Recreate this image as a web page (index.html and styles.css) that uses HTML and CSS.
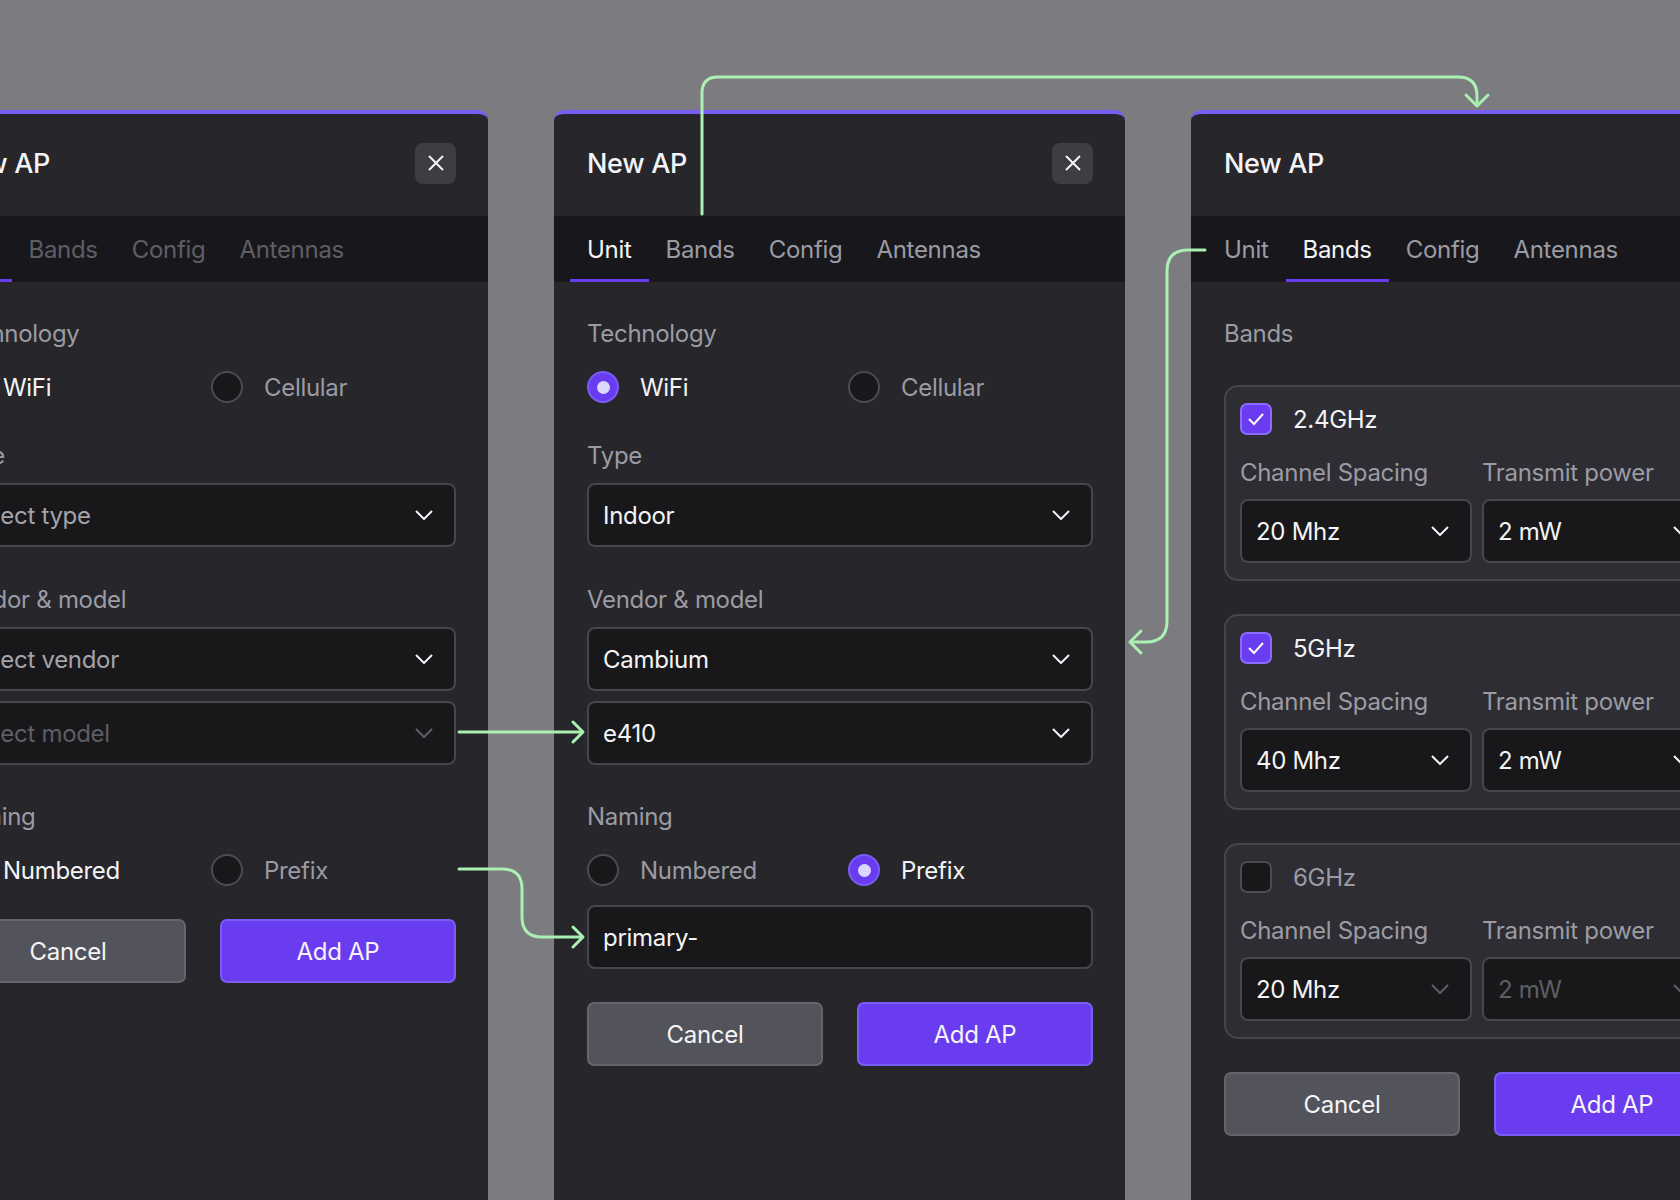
FILE: index.html
```html
<!DOCTYPE html>
<html lang="en">
<head>
  <meta charset="UTF-8">
  <meta name="viewport" content="width=device-width, initial-scale=1.0">
  <title>New AP flow</title>
  <link rel="stylesheet" href="styles.css">
</head>
<body>
  <div class="board">

    <!-- Step 1: empty Unit tab -->
    <section class="modal">
      <header class="modal-header">
        <h2 class="modal-title">New AP</h2>
        <button class="close-btn" aria-label="Close">
          <svg width="20" height="20" viewBox="0 0 20 20"><path d="M3 3 L17 17 M17 3 L3 17" /></svg>
        </button>
      </header>
      <nav class="tabs tabs-locked">
        <a class="tab active">Unit</a>
        <a class="tab">Bands</a>
        <a class="tab">Config</a>
        <a class="tab">Antennas</a>
      </nav>
      <div class="modal-body">
        <div class="label">Technology</div>
        <div class="radio-row">
          <label class="radio checked"><span class="dot"></span>WiFi</label>
          <label class="radio"><span class="dot"></span>Cellular</label>
        </div>

        <div class="label gap-top">Type</div>
        <div class="select placeholder">
          <span>Select type</span>
          <svg class="chevron" width="18" height="10" viewBox="0 0 18 10"><path d="M1 1 L9 9 L17 1" /></svg>
        </div>

        <div class="label gap-top">Vendor &amp; model</div>
        <div class="select placeholder">
          <span>Select vendor</span>
          <svg class="chevron" width="18" height="10" viewBox="0 0 18 10"><path d="M1 1 L9 9 L17 1" /></svg>
        </div>
        <div class="select stacked disabled">
          <span>Select model</span>
          <svg class="chevron" width="18" height="10" viewBox="0 0 18 10"><path d="M1 1 L9 9 L17 1" /></svg>
        </div>

        <div class="label gap-top naming">Naming</div>
        <div class="radio-row">
          <label class="radio checked"><span class="dot"></span>Numbered</label>
          <label class="radio"><span class="dot"></span>Prefix</label>
        </div>

        <div class="actions">
          <button class="btn btn-cancel">Cancel</button>
          <button class="btn btn-primary">Add AP</button>
        </div>
      </div>
    </section>

    <!-- Step 2: Unit tab filled in -->
    <section class="modal">
      <header class="modal-header">
        <h2 class="modal-title">New AP</h2>
        <button class="close-btn" aria-label="Close">
          <svg width="20" height="20" viewBox="0 0 20 20"><path d="M3 3 L17 17 M17 3 L3 17" /></svg>
        </button>
      </header>
      <nav class="tabs">
        <a class="tab active">Unit</a>
        <a class="tab">Bands</a>
        <a class="tab">Config</a>
        <a class="tab">Antennas</a>
      </nav>
      <div class="modal-body">
        <div class="label">Technology</div>
        <div class="radio-row">
          <label class="radio checked"><span class="dot"></span>WiFi</label>
          <label class="radio"><span class="dot"></span>Cellular</label>
        </div>

        <div class="label gap-top">Type</div>
        <div class="select">
          <span>Indoor</span>
          <svg class="chevron" width="18" height="10" viewBox="0 0 18 10"><path d="M1 1 L9 9 L17 1" /></svg>
        </div>

        <div class="label gap-top">Vendor &amp; model</div>
        <div class="select">
          <span>Cambium</span>
          <svg class="chevron" width="18" height="10" viewBox="0 0 18 10"><path d="M1 1 L9 9 L17 1" /></svg>
        </div>
        <div class="select stacked">
          <span>e410</span>
          <svg class="chevron" width="18" height="10" viewBox="0 0 18 10"><path d="M1 1 L9 9 L17 1" /></svg>
        </div>

        <div class="label gap-top naming">Naming</div>
        <div class="radio-row">
          <label class="radio"><span class="dot"></span>Numbered</label>
          <label class="radio checked"><span class="dot"></span>Prefix</label>
        </div>
        <div class="text-input">primary-</div>

        <div class="actions">
          <button class="btn btn-cancel">Cancel</button>
          <button class="btn btn-primary">Add AP</button>
        </div>
      </div>
    </section>

    <!-- Step 3: Bands tab -->
    <section class="modal">
      <header class="modal-header">
        <h2 class="modal-title">New AP</h2>
        <button class="close-btn" aria-label="Close">
          <svg width="20" height="20" viewBox="0 0 20 20"><path d="M3 3 L17 17 M17 3 L3 17" /></svg>
        </button>
      </header>
      <nav class="tabs">
        <a class="tab">Unit</a>
        <a class="tab active">Bands</a>
        <a class="tab">Config</a>
        <a class="tab">Antennas</a>
      </nav>
      <div class="modal-body">
        <div class="label">Bands</div>

        <div class="band-card">
          <label class="check-row"><span class="checkbox checked"><svg width="18" height="14" viewBox="0 0 18 14"><path d="M2 7 L7 12 L16 2" /></svg></span>2.4GHz</label>
          <div class="band-grid">
            <div>
              <div class="label">Channel Spacing</div>
              <div class="select">
                <span>20 Mhz</span>
                <svg class="chevron" width="18" height="10" viewBox="0 0 18 10"><path d="M1 1 L9 9 L17 1" /></svg>
              </div>
            </div>
            <div>
              <div class="label">Transmit power</div>
              <div class="select">
                <span>2 mW</span>
                <svg class="chevron" width="18" height="10" viewBox="0 0 18 10"><path d="M1 1 L9 9 L17 1" /></svg>
              </div>
            </div>
          </div>
        </div>

        <div class="band-card">
          <label class="check-row"><span class="checkbox checked"><svg width="18" height="14" viewBox="0 0 18 14"><path d="M2 7 L7 12 L16 2" /></svg></span>5GHz</label>
          <div class="band-grid">
            <div>
              <div class="label">Channel Spacing</div>
              <div class="select">
                <span>40 Mhz</span>
                <svg class="chevron" width="18" height="10" viewBox="0 0 18 10"><path d="M1 1 L9 9 L17 1" /></svg>
              </div>
            </div>
            <div>
              <div class="label">Transmit power</div>
              <div class="select">
                <span>2 mW</span>
                <svg class="chevron" width="18" height="10" viewBox="0 0 18 10"><path d="M1 1 L9 9 L17 1" /></svg>
              </div>
            </div>
          </div>
        </div>

        <div class="band-card off">
          <label class="check-row"><span class="checkbox"></span>6GHz</label>
          <div class="band-grid">
            <div>
              <div class="label">Channel Spacing</div>
              <div class="select dim-chevron">
                <span>20 Mhz</span>
                <svg class="chevron" width="18" height="10" viewBox="0 0 18 10"><path d="M1 1 L9 9 L17 1" /></svg>
              </div>
            </div>
            <div>
              <div class="label">Transmit power</div>
              <div class="select disabled">
                <span>2 mW</span>
                <svg class="chevron" width="18" height="10" viewBox="0 0 18 10"><path d="M1 1 L9 9 L17 1" /></svg>
              </div>
            </div>
          </div>
        </div>

        <div class="actions">
          <button class="btn btn-cancel">Cancel</button>
          <button class="btn btn-primary">Add AP</button>
        </div>
      </div>
    </section>
  </div>

  <!-- Flow arrows between the steps -->
  <svg class="links" width="1680" height="1200" viewBox="0 0 1680 1200">
    <path d="M702 214 V93 Q702 77 718 77 H1458 Q1477 77 1477 96 V105" />
    <path d="M1466 95 L1477 106 L1488 95" />

    <path d="M1205 250 H1188 Q1167 250 1167 271 V621 Q1167 642 1146 642 H1131" />
    <path d="M1141 631 L1130 642 L1141 653" />

    <path d="M459 732 H582" />
    <path d="M573 722 L583 732 L573 742" />

    <path d="M459 869 H502 Q522 869 522 889 V917 Q522 937 542 937 H582" />
    <path d="M573 927 L583 937 L573 947" />
  </svg>
</body>
</html>
```

FILE: styles.css
```css
:root {
  --page-bg: #7c7b80;
  --panel-bg: #26262b;
  --tabbar-bg: #18181c;
  --field-bg: #18181b;
  --field-border: #46464d;
  --card-bg: #2d2d33;
  --purple: #6a3cf0;
  --purple-light: #7b5cf6;
  --text: #f4f4f6;
  --muted: #9b9ba3;
  --faint: #5e5e65;
  --link: #a9f0b2;
}

* {
  box-sizing: border-box;
}

body {
  margin: 0;
  width: 1680px;
  height: 1200px;
  overflow: hidden;
  position: relative;
  background: var(--page-bg);
  font-family: "Inter", "Noto Sans", sans-serif;
  font-size: 24px;
  letter-spacing: -0.3px;
  color: var(--text);
}

/* Row of modals */
.board {
  display: flex;
  gap: 66px;
  padding-top: 110px;
  margin-left: -83px;
}

.modal {
  flex: 0 0 571px;
  height: 1100px;
  background: var(--panel-bg);
  border-top: 4px solid var(--purple-light);
  border-radius: 10px 10px 0 0;
}

/* Header */
.modal-header {
  height: 102px;
  display: flex;
  justify-content: space-between;
  align-items: center;
  padding: 0 32px 4px 33px;
}

.modal-title {
  margin: 0;
  font-size: 27px;
  font-weight: 500;
}

.close-btn {
  width: 41px;
  height: 41px;
  border: none;
  border-radius: 8px;
  background: #3d3d44;
  display: flex;
  align-items: center;
  justify-content: center;
  padding: 0;
}

.close-btn path {
  stroke: var(--text);
  stroke-width: 2;
  fill: none;
}

/* Tabs */
.tabs {
  height: 66px;
  background: var(--tabbar-bg);
  display: flex;
  padding-left: 16px;
}

.tab {
  display: flex;
  align-items: center;
  padding: 3px 17px 0;
  border-bottom: 3px solid transparent;
  color: var(--muted);
}

.tab.active {
  color: var(--text);
  border-bottom-color: var(--purple);
}

.tabs-locked .tab {
  color: var(--faint);
}

.tabs-locked .tab.active {
  color: var(--text);
}

/* Form body */
.modal-body {
  padding: 38px 32px 0 33px;
}

.label {
  line-height: 28px;
  color: var(--muted);
}

.gap-top {
  margin-top: 39px;
}

.gap-top.naming {
  margin-top: 38px;
}

.radio-row {
  display: grid;
  grid-template-columns: 1fr 1fr;
  gap: 16px;
  margin-top: 23px;
}

.radio {
  display: flex;
  align-items: center;
  gap: 21px;
  height: 32px;
  color: var(--muted);
}

.radio .dot {
  width: 32px;
  height: 32px;
  border-radius: 50%;
  background: var(--field-bg);
  border: 2px solid #4b4b52;
  display: flex;
  align-items: center;
  justify-content: center;
}

.radio.checked {
  color: var(--text);
}

.radio.checked .dot {
  background: var(--purple);
  border-color: var(--purple-light);
}

.radio.checked .dot::after {
  content: '';
  width: 13px;
  height: 13px;
  border-radius: 50%;
  background: #ddd7ff;
}

/* Selects and inputs */
.select,
.text-input {
  height: 64px;
  margin-top: 13px;
  display: flex;
  align-items: center;
  justify-content: space-between;
  padding: 0 21px 0 14px;
  background: var(--field-bg);
  border: 2px solid var(--field-border);
  border-radius: 8px;
  color: var(--text);
}

.select.stacked {
  margin-top: 10px;
}

.chevron path {
  stroke: var(--text);
  stroke-width: 2;
  fill: none;
}

.select.placeholder span {
  color: #a3a3aa;
}

.select.disabled span {
  color: var(--faint);
}

.select.disabled .chevron path,
.select.dim-chevron .chevron path {
  stroke: var(--faint);
}

.text-input {
  margin-top: 19px;
}

/* Band cards */
.band-card {
  margin-top: 37px;
  padding: 16px 14px;
  background: var(--card-bg);
  border: 2px solid #45454c;
  border-radius: 14px;
}

.band-card + .band-card {
  margin-top: 33px;
}

.check-row {
  display: flex;
  align-items: center;
  gap: 21px;
  height: 32px;
}

.checkbox {
  width: 32px;
  height: 32px;
  border-radius: 7px;
  background: var(--field-bg);
  border: 2px solid #4b4b52;
  display: flex;
  align-items: center;
  justify-content: center;
}

.checkbox.checked {
  background: var(--purple);
  border-color: #8a6cff;
}

.checkbox path {
  stroke: #fff;
  stroke-width: 2;
  fill: none;
}

.band-card.off .check-row {
  color: var(--muted);
}

.band-grid {
  display: grid;
  grid-template-columns: 1fr 1fr;
  gap: 10px;
  margin-top: 24px;
}

.band-grid .select {
  margin-top: 12px;
}

.band-grid .label {
  white-space: nowrap;
}

/* Footer buttons */
.actions {
  display: grid;
  grid-template-columns: 1fr 1fr;
  gap: 34px;
  margin-top: 33px;
}

.btn {
  height: 64px;
  border-radius: 7px;
  font-family: inherit;
  font-size: 24px;
  letter-spacing: inherit;
  color: var(--text);
}

.btn-cancel {
  background: #53535b;
  border: 2px solid #65656d;
}

.btn-primary {
  background: var(--purple);
  border: 2px solid var(--purple-light);
}

/* Connector arrows drawn over the modals */
.links {
  position: absolute;
  top: 0;
  left: 0;
  pointer-events: none;
}

.links path {
  stroke: var(--link);
  stroke-width: 3;
  fill: none;
  stroke-linecap: round;
  stroke-linejoin: round;
}
```
